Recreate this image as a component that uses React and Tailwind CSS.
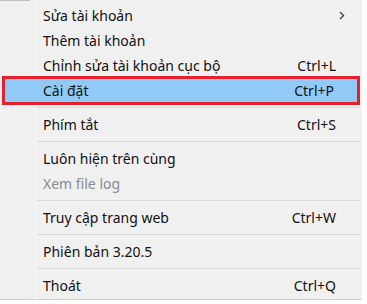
const items = [
  { label: 'Sửa tài khoản', sub: true },
  { label: 'Thêm tài khoản' },
  { label: 'Chỉnh sửa tài khoản cục bộ', key: 'Ctrl+L' },
  { label: 'Cài đặt', key: 'Ctrl+P', active: true },
  { sep: true },
  { label: 'Phím tắt', key: 'Ctrl+S' },
  { sep: true },
  { label: 'Luôn hiện trên cùng' },
  { label: 'Xem file log', disabled: true },
  { sep: true },
  { label: 'Truy cập trang web', key: 'Ctrl+W' },
  { sep: true },
  { label: 'Phiên bản 3.20.5' },
  { sep: true },
  { label: 'Thoát', key: 'Ctrl+Q' },
]

const Chevron = () => (
  <svg width="6" height="9" viewBox="0 0 6 9" className="text-[#444]">
    <path d="M1 1 L4.5 4.5 L1 8" fill="none" stroke="currentColor" strokeWidth="1.4" />
  </svg>
)

const MenuRow = ({ item }) => {
  if (item.sep) {
    return (
      <div className="flex h-[9px] items-center pl-[37px] pr-[2px]">
        <div className="h-px flex-1 bg-[#d9d9d9]" />
      </div>
    )
  }

  const box = item.active
    ? 'mx-[2px] -my-[2px] h-[29px] border-[3px] border-[#e4202c] bg-[#91c9f7] pl-[38px] pr-[23px]'
    : 'h-[25px] pl-[43px] pr-[26px]'

  return (
    <div
      className={`flex items-center ${box} ${item.disabled ? 'text-[#8a8a8a]' : 'text-[#111]'}`}
    >
      <span className="flex-1">{item.label}</span>
      {item.key && <span>{item.key}</span>}
      {item.sub && (
        <span className="-mr-[9px] flex items-center">
          <Chevron />
        </span>
      )}
    </div>
  )
}

export default function App() {
  return (
    <div className="h-[304px] w-[367px] bg-white font-['Noto_Sans',sans-serif] text-[14px]">
      <div className="relative w-[362px] border-b border-[#cfcfcf] bg-[#f0f0f0] pt-[3px] pb-px">
        <div className="absolute left-[36px] top-0 bottom-0 w-px bg-[#f7f7f7]" />
        <div className="absolute left-0 top-0 h-px w-[30px] bg-[#bdbdbd]" />
        <div className="relative">
          {items.map((item, i) => (
            <MenuRow key={i} item={item} />
          ))}
        </div>
      </div>
    </div>
  )
}
